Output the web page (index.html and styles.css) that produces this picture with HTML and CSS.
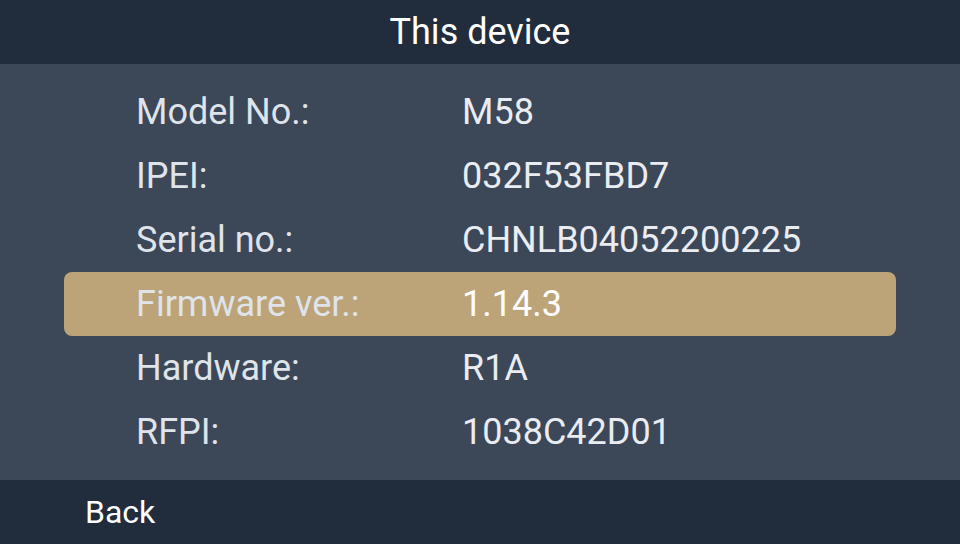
FILE: index.html
```html
<!DOCTYPE html>
<html lang="en">
<head>
    <meta charset="UTF-8">
    <title>This device</title>
    <link rel="stylesheet" href="styles.css">
</head>
<body>
    <div class="screen">
        <header class="title-bar">This device</header>

        <main class="info-list">
            <div class="info-row">
                <span class="info-label">Model No.:</span>
                <span class="info-value">M58</span>
            </div>
            <div class="info-row">
                <span class="info-label">IPEI:</span>
                <span class="info-value">032F53FBD7</span>
            </div>
            <div class="info-row">
                <span class="info-label">Serial no.:</span>
                <span class="info-value">CHNLB04052200225</span>
            </div>
            <div class="info-row selected">
                <span class="info-label">Firmware ver.:</span>
                <span class="info-value">1.14.3</span>
            </div>
            <div class="info-row">
                <span class="info-label">Hardware:</span>
                <span class="info-value">R1A</span>
            </div>
            <div class="info-row">
                <span class="info-label">RFPI:</span>
                <span class="info-value">1038C42D01</span>
            </div>
        </main>

        <footer class="soft-keys">
            <span class="soft-key">Back</span>
        </footer>
    </div>
</body>
</html>
```

FILE: styles.css
```css
body {
    margin: 0;
    padding: 0;
    font-family: Roboto, "Liberation Sans", sans-serif;
    background-color: #3c4758;
}
.screen {
    width: 960px;
    height: 544px;
    display: flex;
    flex-direction: column;
}
.title-bar {
    height: 64px;
    background-color: #212c3d;
    color: #ffffff;
    font-size: 36px;
    display: flex;
    align-items: center;
    justify-content: center;
}
.info-list {
    flex: 1;
    background-color: #3c4758;
    padding: 16px 64px;
    display: flex;
    flex-direction: column;
}
.info-row {
    height: 64px;
    display: flex;
    align-items: center;
    padding-left: 72px;
    border-radius: 8px;
    font-size: 36px;
}
.info-label {
    width: 326px;
    color: #dfe3ea;
}
.info-value {
    color: #e9ecf1;
}
.info-row.selected {
    background-color: #bca478;
}
.info-row.selected .info-value {
    color: #ffffff;
}
.soft-keys {
    height: 64px;
    background-color: #212c3d;
    display: flex;
    align-items: center;
    padding-left: 85px;
}
.soft-key {
    color: #ffffff;
    font-size: 32px;
}
```
